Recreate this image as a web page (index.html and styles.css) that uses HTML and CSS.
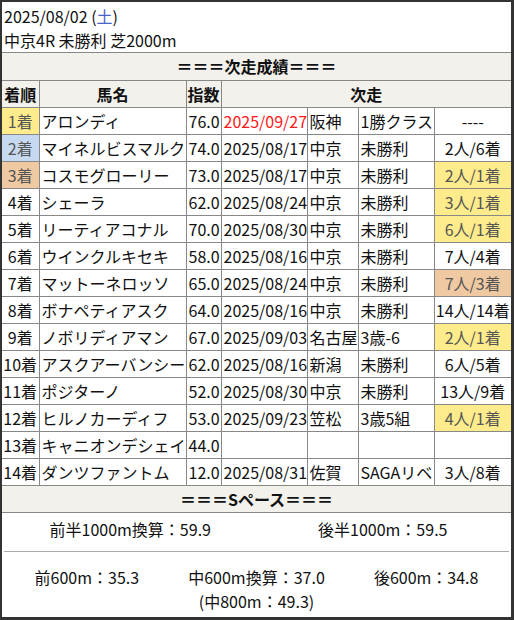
FILE: index.html
```html
<!DOCTYPE html>
<html lang="ja">
<head>
<meta charset="utf-8">
<link rel="stylesheet" href="styles.css">
</head>
<body>
<div class="card">
  <div class="head">
    <div class="line">2025/08/02 (<span class="sat">土</span>)</div>
    <div class="line">中京4R 未勝利 芝2000m</div>
  </div>
  <table class="res">
    <colgroup>
      <col class="c1"><col class="c2"><col class="c3"><col class="c4"><col class="c5"><col class="c6"><col class="c7">
    </colgroup>
    <tr class="band"><td colspan="7">＝＝＝次走成績＝＝＝</td></tr>
    <tr class="band hd"><td>着順</td><td>馬名</td><td>指数</td><td colspan="4">次走</td></tr>
    <tr><td class="rk gold">1着</td><td>アロンディ</td><td>76.0</td><td class="red">2025/09/27</td><td>阪神</td><td>1勝クラス</td><td class="rs">----</td></tr>
    <tr><td class="rk silver">2着</td><td>マイネルビスマルク</td><td>74.0</td><td>2025/08/17</td><td>中京</td><td>未勝利</td><td class="rs">2人/6着</td></tr>
    <tr><td class="rk bronze">3着</td><td>コスモグローリー</td><td>73.0</td><td>2025/08/17</td><td>中京</td><td>未勝利</td><td class="rs gold">2人/1着</td></tr>
    <tr><td class="rk">4着</td><td>シェーラ</td><td>62.0</td><td>2025/08/24</td><td>中京</td><td>未勝利</td><td class="rs gold">3人/1着</td></tr>
    <tr><td class="rk">5着</td><td>リーティアコナル</td><td>70.0</td><td>2025/08/30</td><td>中京</td><td>未勝利</td><td class="rs gold">6人/1着</td></tr>
    <tr><td class="rk">6着</td><td>ウインクルキセキ</td><td>58.0</td><td>2025/08/16</td><td>中京</td><td>未勝利</td><td class="rs">7人/4着</td></tr>
    <tr><td class="rk">7着</td><td>マットーネロッソ</td><td>65.0</td><td>2025/08/24</td><td>中京</td><td>未勝利</td><td class="rs bronze">7人/3着</td></tr>
    <tr><td class="rk">8着</td><td>ボナペティアスク</td><td>64.0</td><td>2025/08/16</td><td>中京</td><td>未勝利</td><td class="rs">14人/14着</td></tr>
    <tr><td class="rk">9着</td><td>ノボリディアマン</td><td>67.0</td><td>2025/09/03</td><td>名古屋</td><td>3歳-6</td><td class="rs gold">2人/1着</td></tr>
    <tr><td class="rk">10着</td><td>アスクアーバンシー</td><td>62.0</td><td>2025/08/16</td><td>新潟</td><td>未勝利</td><td class="rs">6人/5着</td></tr>
    <tr><td class="rk">11着</td><td>ポジターノ</td><td>52.0</td><td>2025/08/30</td><td>中京</td><td>未勝利</td><td class="rs">13人/9着</td></tr>
    <tr><td class="rk">12着</td><td>ヒルノカーディフ</td><td>53.0</td><td>2025/09/23</td><td>笠松</td><td>3歳5組</td><td class="rs gold">4人/1着</td></tr>
    <tr><td class="rk">13着</td><td>キャニオンデシェイ</td><td>44.0</td><td></td><td></td><td></td><td class="rs"></td></tr>
    <tr><td class="rk">14着</td><td>ダンツファントム</td><td>12.0</td><td>2025/08/31</td><td>佐賀</td><td>SAGAリベ</td><td class="rs">3人/8着</td></tr>
    <tr class="band"><td colspan="7">＝＝＝Sペース＝＝＝</td></tr>
  </table>
  <div class="pace">
    <div class="prow top">
      <div class="pc">前半1000m換算：59.9</div>
      <div class="pc">後半1000m：59.5</div>
    </div>
    <div class="prow bottom">
      <div class="pc">前600m：35.3</div>
      <div class="pc">中600m換算：37.0<br>(中800m：49.3)</div>
      <div class="pc">後600m：34.8</div>
    </div>
  </div>
</div>
</body>
</html>
```

FILE: styles.css
```css
* { box-sizing: border-box; }
html, body { margin: 0; padding: 0; background: #fff; }
body {
  font-family: "Noto Sans CJK JP", "Noto Sans", sans-serif;
  font-size: 16px;
  color: #111;
}
.card {
  width: 514px;
  height: 620px;
  border-style: solid;
  border-color: #333;
  border-width: 2px 3px 3px 2px;
  background: #fff;
  display: flex;
  flex-direction: column;
}
.head {
  padding: 2px 0 0 2px;
  border-bottom: 1px solid #888;
}
.line { line-height: 24px; height: 24px; }
.sat { color: #4a63c8; }

.res {
  width: 509px;
  border-collapse: collapse;
  table-layout: fixed;
  border-style: hidden;
}
.c1 { width: 37px; }
.c2 { width: 147px; }
.c3 { width: 35px; }
.c4 { width: 86px; }
.c5 { width: 51px; }
.c6 { width: 76px; }
.c7 { width: 77px; }
.res td {
  border: 1px solid #888;
  height: 27px;
  padding: 0 0 0 2px;
  line-height: 24px;
  white-space: nowrap;
  overflow: hidden;
}
.band td {
  background: #f2f1ec;
  font-weight: bold;
  text-align: center;
  padding: 0;
}
.res td.rk { text-align: center; padding: 0; }
.res td.rs { text-align: center; padding: 0; }
.red { color: #ff1a1a; }
.gold { background: #feeb8b; color: #555; }
.silver { background: #c6d9f1; color: #555; }
.bronze { background: #efc9a2; color: #555; }

.pace {
  border-top: 1px solid #888;
  flex: 1;
}
.prow {
  display: flex;
  line-height: 24px;
  text-align: center;
}
.pc { flex: 1; }
.prow.top {
  padding: 4px 0 10px;
  margin: 0 2px;
  border-bottom: 1px solid #aaa;
}
.prow.bottom { padding-top: 13px; }
```
